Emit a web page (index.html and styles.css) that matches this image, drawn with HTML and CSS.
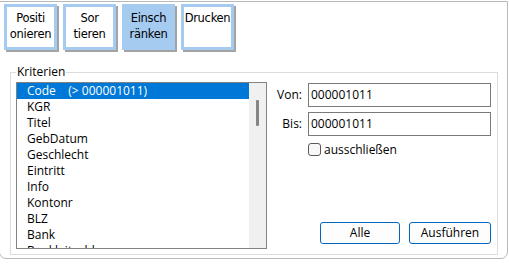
FILE: index.html
```html
<!DOCTYPE html>
<html>
<head>
<meta charset="utf-8">
<link rel="stylesheet" href="styles.css">
</head>
<body>
<div class="frame">
  <div class="toolbar">
    <div class="tbtn">Positi<br>onieren</div>
    <div class="tbtn">Sor<br>tieren</div>
    <div class="tbtn active">Einsch<br>ränken</div>
    <div class="tbtn">Drucken</div>
  </div>
  <fieldset class="group">
    <legend>Kriterien</legend>
    <div class="group-body">
      <div class="listbox">
        <div class="items">
          <div class="item selected">Code    (&gt; 000001011)</div>
          <div class="item">KGR</div>
          <div class="item">Titel</div>
          <div class="item">GebDatum</div>
          <div class="item">Geschlecht</div>
          <div class="item">Eintritt</div>
          <div class="item">Info</div>
          <div class="item">Kontonr</div>
          <div class="item">BLZ</div>
          <div class="item">Bank</div>
          <div class="item">Bankleitzahl</div>
        </div>
        <div class="scrollbar"><div class="thumb"></div></div>
      </div>
      <div class="side">
        <div class="fields">
          <label class="lbl">Von:</label>
          <div class="input">000001011</div>
          <label class="lbl">Bis:</label>
          <div class="input">000001011</div>
          <span></span>
          <div class="check"><span class="box"></span><span>ausschließen</span></div>
        </div>
        <div class="actions">
          <div class="btn btn-alle">Alle</div>
          <div class="btn btn-run">Ausführen</div>
        </div>
      </div>
    </div>
  </fieldset>
</div>
</body>
</html>
```
FILE: styles.css
```css
* { box-sizing: border-box; }
html, body { margin: 0; padding: 0; background: #ffffff; }
body {
  font-family: "Open Sans", "Noto Sans", sans-serif;
  font-size: 12px;
  color: #000;
  width: 509px;
  height: 264px;
  overflow: hidden;
}
.frame {
  margin-top: 1px;
  margin-left: -1px;
  width: 509px;
  height: 258px;
  border: 1px solid #b9b9b9;
  border-radius: 0 0 7px 7px;
  padding: 2px 0 0 4px;
}
.toolbar {
  display: flex;
  gap: 6px;
  height: 48px;
}
.tbtn {
  width: 53px;
  height: 46px;
  border: 3px solid #a6cbf0;
  box-shadow: 2px 2px 0 #a3a3a3;
  background: #fff;
  text-align: center;
  line-height: 16px;
  padding-top: 3px;
  font-family: "DejaVu Sans", sans-serif;
  font-size: 11.5px;
  letter-spacing: -0.3px;
  color: #000;
}
.tbtn.active { background: #a6cbf0; }
.group {
  margin: 12px 0 0 6px;
  width: 488px;
  height: 191px;
  border: 1px solid #dcdcdc;
  border-radius: 0;
  padding: 2px 5px 5px 5px;
}
.group legend {
  padding: 0 1px;
  line-height: 16px;
  color: #000;
}
.group-body {
  display: flex;
  height: 100%;
}
.listbox {
  width: 251px;
  height: 167px;
  border: 1px solid #828282;
  display: flex;
  overflow: hidden;
}
.items {
  flex: 1;
  overflow: hidden;
}
.item {
  height: 16px;
  line-height: 16px;
  padding-left: 10px;
  white-space: pre;
}
.item.selected {
  background: #0078d7;
  color: #fff;
}
.scrollbar {
  width: 17px;
  background: #f0f0f0;
  position: relative;
}
.thumb {
  position: absolute;
  left: 7px;
  top: 17px;
  width: 3px;
  height: 26px;
  background: #858585;
  border-radius: 1px;
}
.side {
  flex: 1;
  display: flex;
  flex-direction: column;
  justify-content: space-between;
  padding: 0 0 5px 0;
}
.fields {
  display: grid;
  grid-template-columns: 35px 183px;
  column-gap: 6px;
  row-gap: 5px;
  align-items: center;
  padding-top: 1px;
}
.lbl {
  text-align: right;
  line-height: 24px;
}
.input {
  height: 24px;
  border: 1px solid #7a7a7a;
  padding-left: 2px;
  line-height: 22px;
}
.check {
  display: flex;
  align-items: center;
  gap: 3px;
  height: 16px;
  margin-top: 0;
}
.box {
  width: 13px;
  height: 13px;
  border: 1px solid #5a5a5a;
  border-radius: 3px;
  background: #f7f7f7;
}
.actions {
  display: flex;
  justify-content: flex-end;
  gap: 9px;
  padding-right: 1px;
}
.btn {
  height: 22px;
  border: 1px solid #0067c0;
  border-radius: 3px;
  background: #fdfdfd;
  text-align: center;
  line-height: 20px;
}
.btn-alle { width: 80px; }
.btn-run { width: 82px; }
```
